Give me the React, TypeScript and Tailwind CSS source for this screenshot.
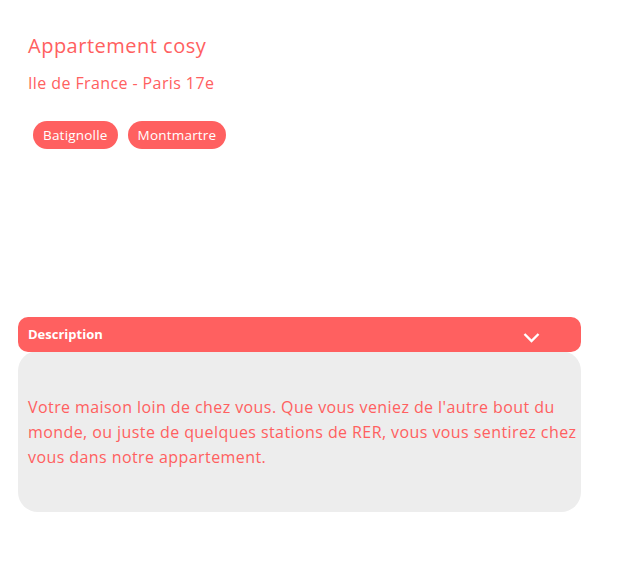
const tags = ['Batignolle', 'Montmartre'];

export default function App() {
  return (
    <div className="w-[627px] h-[582px] bg-white font-['Open_Sans',sans-serif] text-[#FF6060]">
      <div className="pl-[28px] pt-[32px]">
        <h1 className="text-[20px] leading-[28px] tracking-[0.5px]">Appartement cosy</h1>
        <p className="mt-[12px] text-[16px] leading-[22px] tracking-[0.4px]">Ile de France - Paris 17e</p>
        <div className="mt-[27px] ml-[5px] flex gap-[10px]">
          {tags.map((tag) => (
            <span
              key={tag}
              className="h-[28px] px-[10px] rounded-full bg-[#FF6060] text-white text-[13.5px] tracking-[0.2px] font-medium flex items-center"
            >
              {tag}
            </span>
          ))}
        </div>
      </div>

      <div className="mt-[168px] ml-[18px] w-[563px]">
        <div className="relative z-10 h-[35px] rounded-[10px] bg-[#FF6060] pl-[10px] pr-[41px] flex items-center justify-between text-white">
          <span className="text-[13px] font-bold">Description</span>
          <svg width="17" height="11" viewBox="0 0 17 11" className="mt-[6px]">
            <polyline points="1.5,2 8.5,9 15.5,2" fill="none" stroke="white" strokeWidth="2.4" />
          </svg>
        </div>
        <div className="-mt-[1px] h-[161px] rounded-[20px] bg-[#EDEDED] pl-[10px] flex items-center">
          <p className="text-[16px] leading-[25px] tracking-[0.42px] pt-[2px]">
            Votre maison loin de chez vous. Que vous veniez de l'autre bout du monde, ou juste de
            quelques stations de RER, vous vous sentirez chez vous dans notre appartement.
          </p>
        </div>
      </div>
    </div>
  );
}
